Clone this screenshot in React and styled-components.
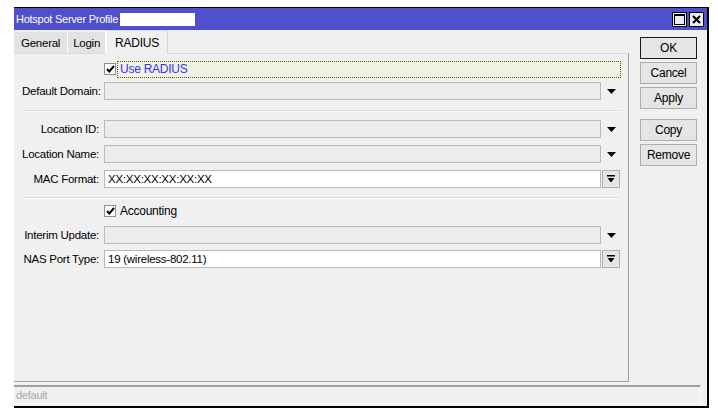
import React from "react";
import styled, { createGlobalStyle } from "styled-components";

const GlobalStyle = createGlobalStyle`
  html, body {
    margin: 0;
    padding: 0;
    background: #ffffff;
  }
  body {
    font-family: "Liberation Sans", Arial, sans-serif;
    font-size: 11px;
    letter-spacing: -0.25px;
    color: #000;
  }
`;

const Page = styled.div`
  width: 718px;
  height: 418px;
  padding: 7px 0 0 14px;
  box-sizing: border-box;
`;

const Window = styled.div`
  width: 695px;
  height: 401px;
  box-sizing: border-box;
  border-top: 1px solid #000;
  border-right: 2px solid #000;
  border-bottom: 2px solid #000;
  background: #f0f0f0;
  display: flex;
  flex-direction: column;
`;

const TitleBar = styled.div`
  height: 22px;
  background: #5050cc;
  display: flex;
  align-items: center;
  padding: 0 3px 0 2px;
  color: #fff;
`;

const TitleText = styled.span`
  font-size: 11px;
`;

const Redacted = styled.span`
  display: inline-block;
  width: 75px;
  height: 13px;
  margin-left: 2px;
  background: #fff;
`;

const TitleButtons = styled.div`
  margin-left: auto;
  display: flex;
  gap: 2px;
`;

const TitleButton = styled.div`
  width: 15px;
  height: 15px;
  box-sizing: border-box;
  border: 1px solid #000;
  background: #ececec;
  display: flex;
  align-items: center;
  justify-content: center;
`;

const Main = styled.div`
  flex: 1;
  display: flex;
`;

const LeftSide = styled.div`
  width: 615px;
  display: flex;
  flex-direction: column;
`;

const TabStrip = styled.div`
  height: 23px;
  display: flex;
  align-items: flex-end;
  position: relative;
  z-index: 1;
`;

const Tab = styled.div`
  height: ${(p) => (p.$active ? "24px" : "21px")};
  margin-bottom: ${(p) => (p.$active ? "-1px" : "0")};
  padding: 0 ${(p) => p.$pad}px;
  box-sizing: border-box;
  display: flex;
  align-items: center;
  font-size: ${(p) => (p.$active ? "12px" : "11.5px")};
  background: ${(p) => (p.$active ? "#f0f0f0" : "#e3e3e3")};
  border-right: 1px solid ${(p) => (p.$active ? "#d4d4d4" : "#ffffff")};
  border-top: ${(p) => (p.$active ? "1px solid #d9d9d9" : "none")};
  border-left: ${(p) => (p.$active ? "1px solid #fff" : "none")};
`;

const Panel = styled.div`
  flex: 1;
  border-top: 1px solid #d9d9d9;
  border-right: 1px solid #a0a0a0;
  border-bottom: 1px solid #a0a0a0;
  padding: 6px 7px 0 8px;
  display: flex;
  flex-direction: column;
`;

const Group = styled.div`
  display: flex;
  flex-direction: column;
  gap: ${(p) => p.$gap}px;
`;

const Row = styled.div`
  height: 18px;
  display: flex;
  align-items: center;
`;

const Label = styled.div`
  width: 77px;
  text-align: right;
  padding-right: 5px;
  font-size: 11.5px;
  white-space: nowrap;
`;

const Field = styled.div`
  flex: 1;
  height: 18px;
  box-sizing: border-box;
  border: 1px solid #bababa;
  background: ${(p) => (p.$enabled ? "#ffffff" : "#ececec")};
  display: flex;
  align-items: center;
  padding-left: 3px;
  font-size: 11.5px;
`;

const Side = styled.div`
  width: 19px;
  height: 18px;
  display: flex;
  align-items: center;
  justify-content: center;
  margin-left: 1px;
`;

const SideButton = styled(Side)`
  box-sizing: border-box;
  border: 1px solid #b0b0b0;
  background: #e6e6e6;
  width: 18px;
  margin-right: 1px;
`;

const CheckWrap = styled.div`
  margin-left: 82px;
  display: flex;
  align-items: center;
  flex: ${(p) => (p.$focus ? 1 : "none")};
`;

const Box = styled.div`
  width: 12px;
  height: 12px;
  box-sizing: border-box;
  border: 1px solid #8f8f8f;
  background: #fff;
  display: flex;
  align-items: center;
  justify-content: center;
`;

const CheckText = styled.div`
  margin-left: ${(p) => (p.$focus ? "1px" : "4px")};
  flex: ${(p) => (p.$focus ? 1 : "none")};
  height: ${(p) => (p.$focus ? "17px" : "auto")};
  box-sizing: border-box;
  border: ${(p) => (p.$focus ? "1px dotted #5a5a00" : "none")};
  background: ${(p) => (p.$focus ? "#f2f2e4" : "transparent")};
  color: ${(p) => (p.$focus ? "#3232ff" : "#000")};
  display: flex;
  align-items: center;
  padding-left: ${(p) => (p.$focus ? "2px" : "0")};
  font-size: 12px;
`;

const Separator = styled.div`
  height: 1px;
  background: #dcdcdc;
  border-bottom: 1px solid #f8f8f8;
  margin: ${(p) => p.$m};
  margin-right: 1px;
`;

const ButtonColumn = styled.div`
  margin-left: 11px;
  padding-top: 7px;
  width: 57px;
  display: flex;
  flex-direction: column;
`;

const Button = styled.div`
  height: 22px;
  box-sizing: border-box;
  border: 1px solid ${(p) => (p.$default ? "#1a1a1a" : "#adadad")};
  background: #e5e5e5;
  display: flex;
  align-items: center;
  justify-content: center;
  font-size: 12px;
  margin-top: ${(p) => p.$mt || 0}px;
`;

const StatusBar = styled.div`
  margin: 3px 6px 2px 0;
  height: 19px;
  box-sizing: border-box;
  border-top: 2px solid #a0a0a0;
  border-bottom: 1px solid #fbfbfb;
  border-right: 1px solid #fbfbfb;
  display: flex;
  align-items: center;
  padding-left: 2px;
  color: #a8a8a8;
  font-size: 11px;
`;

const Arrow = () => (
  <svg width="9" height="5" viewBox="0 0 9 5">
    <path d="M0 0h9L4.5 5z" fill="#000" />
  </svg>
);

const BarArrow = () => (
  <svg width="8" height="8" viewBox="0 0 8 8">
    <path d="M0 0h8v1.5H0z M0.5 3h7L4 7.5z" fill="#000" />
  </svg>
);

const Check = () => (
  <svg width="9" height="8" viewBox="0 0 9 8">
    <path d="M1 4l2.3 2.5L8 1" stroke="#000" strokeWidth="2" fill="none" />
  </svg>
);

const SelectRow = ({ label, value, enabled, button }) => (
  <Row>
    <Label>{label}</Label>
    <Field $enabled={enabled}>{value}</Field>
    {button ? (
      <SideButton>
        <BarArrow />
      </SideButton>
    ) : (
      <Side>
        <Arrow />
      </Side>
    )}
  </Row>
);

const CheckRow = ({ text, focus }) => (
  <Row>
    <CheckWrap $focus={focus}>
      <Box>
        <Check />
      </Box>
      <CheckText $focus={focus}>{text}</CheckText>
    </CheckWrap>
  </Row>
);

export default function App() {
  return (
    <>
      <GlobalStyle />
      <Page>
        <Window>
          <TitleBar>
            <TitleText>Hotspot Server Profile</TitleText>
            <Redacted />
            <TitleButtons>
              <TitleButton>
                <svg width="11" height="11" viewBox="0 0 11 11">
                  <rect x="0.5" y="0.5" width="10" height="10" fill="none" stroke="#000" />
                  <rect x="0" y="0" width="11" height="2" fill="#000" />
                </svg>
              </TitleButton>
              <TitleButton>
                <svg width="9" height="9" viewBox="0 0 9 9">
                  <path d="M1 1l7 7M8 1L1 8" stroke="#000" strokeWidth="2" />
                </svg>
              </TitleButton>
            </TitleButtons>
          </TitleBar>
          <Main>
            <LeftSide>
              <TabStrip>
                <Tab $pad={7}>General</Tab>
                <Tab $pad={5}>Login</Tab>
                <Tab $active $pad={8}>RADIUS</Tab>
              </TabStrip>
              <Panel>
                <Group $gap={4}>
                  <CheckRow text="Use RADIUS" focus />
                  <SelectRow label="Default Domain:" />
                </Group>
                <Separator $m="10px 0 8px 0" />
                <Group $gap={7}>
                  <SelectRow label="Location ID:" />
                  <SelectRow label="Location Name:" />
                  <SelectRow label="MAC Format:" value="XX:XX:XX:XX:XX:XX" enabled button />
                </Group>
                <Separator $m="9px 0 3px 0" />
                <Group $gap={6}>
                  <CheckRow text="Accounting" />
                  <SelectRow label="Interim Update:" />
                  <SelectRow label="NAS Port Type:" value="19 (wireless-802.11)" enabled button />
                </Group>
              </Panel>
            </LeftSide>
            <ButtonColumn>
              <Button $default>OK</Button>
              <Button $mt={3}>Cancel</Button>
              <Button $mt={3}>Apply</Button>
              <Button $mt={10}>Copy</Button>
              <Button $mt={3}>Remove</Button>
            </ButtonColumn>
          </Main>
          <StatusBar>default</StatusBar>
        </Window>
      </Page>
    </>
  );
}
